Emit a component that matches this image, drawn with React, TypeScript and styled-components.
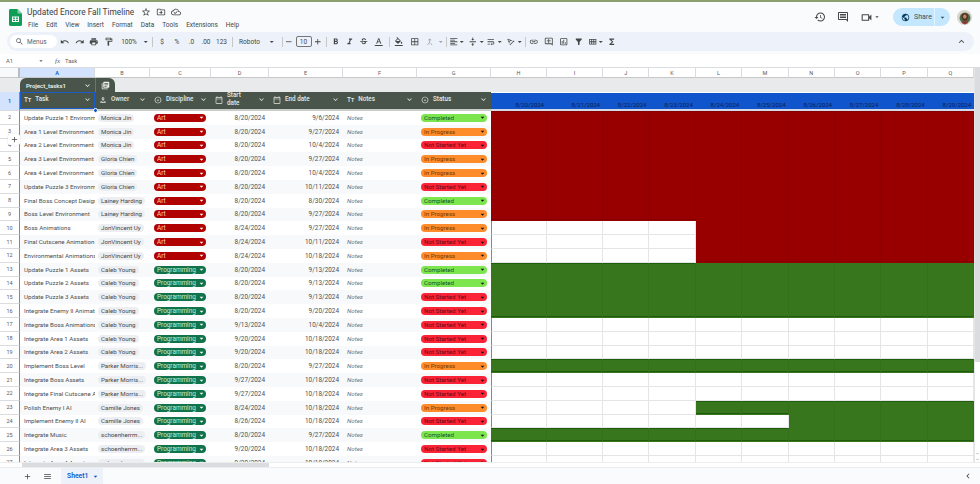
import styled, { createGlobalStyle } from 'styled-components';
import { ReactNode } from 'react';
import {
	MdSearch,
	MdUndo,
	MdRedo,
	MdPrint,
	MdOutlineFormatPaint,
	MdArrowDropDown,
	MdRemove,
	MdAdd,
	MdFormatBold,
	MdFormatItalic,
	MdStrikethroughS,
	MdFormatColorText,
	MdFormatColorFill,
	MdBorderAll,
	MdOutlineCallMerge,
	MdFormatAlignLeft,
	MdVerticalAlignCenter,
	MdWrapText,
	MdTextRotationAngleup,
	MdLink,
	MdOutlineAddComment,
	MdOutlineInsertChart,
	MdFilterAlt,
	MdOutlineViewModule,
	MdFunctions,
	MdKeyboardArrowUp,
	MdKeyboardArrowDown,
	MdHistory,
	MdOutlineComment,
	MdOutlineVideocam,
	MdPublic,
	MdStarBorder,
	MdOutlineDriveFileMove,
	MdOutlineCloudDone,
	MdMenu,
	MdOutlinePerson,
	MdOutlineArrowDropDownCircle,
	MdOutlineCalendarToday,
	MdLibraryBooks,
	MdChevronLeft,
} from 'react-icons/md';

type Fill = 'red' | 'green' | null;
type Status = 'Completed' | 'In Progress' | 'Not Started Yet';

const C: Status = 'Completed';
const P: Status = 'In Progress';
const N: Status = 'Not Started Yet';

const PARKER = 'Parker Morris...';
const SCHOEN = 'schoenherrm...';

// task, owner, start, end, status, first filled gantt column
const rows: [string, string, string, string, Status, number][] = [
	['Update Puzzle 1 Environment', 'Monica Jin', '8/20/2024', '9/6/2024', C, 0],
	['Area 1 Level Environment', 'Monica Jin', '8/20/2024', '9/27/2024', P, 0],
	['Area 2 Level Environment', 'Monica Jin', '8/20/2024', '10/4/2024', N, 0],
	['Area 3 Level Environment', 'Gloria Chien', '8/20/2024', '9/27/2024', P, 0],
	['Area 4 Level Environment', 'Gloria Chien', '8/20/2024', '10/4/2024', P, 0],
	['Update Puzzle 3 Environment', 'Gloria Chien', '8/20/2024', '10/11/2024', N, 0],
	['Final Boss Concept Design', 'Lainey Harding', '8/20/2024', '8/30/2024', C, 0],
	['Boss Level Environment', 'Lainey Harding', '8/20/2024', '9/27/2024', P, 0],
	['Boss Animations', 'JonVincent Uy', '8/24/2024', '9/27/2024', P, 4],
	['Final Cutscene Animation', 'JonVincent Uy', '8/24/2024', '10/11/2024', N, 4],
	['Environmental Animations', 'JonVincent Uy', '8/24/2024', '10/18/2024', P, 4],
	['Update Puzzle 1 Assets', 'Caleb Young', '8/20/2024', '9/13/2024', C, 0],
	['Update Puzzle 2 Assets', 'Caleb Young', '8/20/2024', '9/13/2024', C, 0],
	['Update Puzzle 3 Assets', 'Caleb Young', '8/20/2024', '9/13/2024', N, 0],
	['Integrate Enemy II Animations', 'Caleb Young', '8/20/2024', '9/20/2024', N, 0],
	['Integrate Boss Animations', 'Caleb Young', '9/13/2024', '10/4/2024', N, 10],
	['Integrate Area 1 Assets', 'Caleb Young', '9/20/2024', '10/18/2024', N, 10],
	['Integrate Area 2 Assets', 'Caleb Young', '9/20/2024', '10/18/2024', N, 10],
	['Implement Boss Level', PARKER, '8/20/2024', '9/27/2024', P, 0],
	['Integrate Boss Assets', PARKER, '9/27/2024', '10/18/2024', N, 10],
	['Integrate Final Cutscene Assets', PARKER, '9/27/2024', '10/18/2024', N, 10],
	['Polish Enemy I AI', 'Camille Jones', '8/24/2024', '10/18/2024', P, 4],
	['Implement Enemy II AI', 'Camille Jones', '8/26/2024', '10/18/2024', N, 6],
	['Integrate Music', SCHOEN, '8/20/2024', '9/27/2024', C, 0],
	['Integrate Area 3 Assets', SCHOEN, '9/20/2024', '10/18/2024', N, 10],
	['Integrate Area 4 Assets', SCHOEN, '9/20/2024', '10/18/2024', N, 10],
];

const columns = ['A', 'B', 'C', 'D', 'E', 'F', 'G', 'H', 'I', 'J', 'K', 'L', 'M', 'N', 'O', 'P', 'Q'];
const dates = ['8/20', '8/21', '8/22', '8/23', '8/24', '8/25', '8/26', '8/27', '8/28', '8/29'].map((d) => `${d}/2024`);
const menus = ['File', 'Edit', 'View', 'Insert', 'Format', 'Data', 'Tools', 'Extensions', 'Help'];

const discipline = (index: number) => (index < 11 ? 'Art' : 'Programming');

const fillAt = (rowIndex: number, col: number): Fill => {
	const row = rows[rowIndex];
	if (!row || col < row[5]) return null;
	return rowIndex < 11 ? 'red' : 'green';
};

const Tool = ({ w, children, dim }: { w: number; children: ReactNode; dim?: boolean }) => (
	<ToolButton $w={w} $dim={dim}>
		{children}
	</ToolButton>
);

const Logo = () => (
	<svg width="13" height="17" viewBox="0 0 13 17">
		<path d="M1.4 0H8.5L13 4.5V15.6C13 16.4 12.4 17 11.6 17H1.4C.6 17 0 16.4 0 15.6V1.4C0 .6.6 0 1.4 0Z" fill="#0f9d58" />
		<path d="M8.5 0L13 4.5H9.6C9 4.5 8.5 4 8.5 3.4Z" fill="#87ceac" />
		<path d="M3 7.6H10V13H3ZM4 8.6V9.8H6V8.6ZM7 8.6V9.8H9V8.6ZM4 10.8V12H6V10.8ZM7 10.8V12H9V10.8Z" fill="#fff" fillRule="evenodd" />
	</svg>
);

const Avatar = () => (
	<svg width="15" height="15" viewBox="0 0 15 15">
		<circle cx="7.5" cy="7.5" r="7.5" fill="#d9d4cc" />
		<circle cx="8" cy="8" r="5.4" fill="#4d6b4a" />
		<path d="M4.5 5.5C5 2.8 10 2.6 11 5.2C11.4 7 10.4 8 10 10.4H6.4C5.8 8.6 4.2 7.4 4.5 5.5Z" fill="#5a2f20" />
		<ellipse cx="7.8" cy="6.6" rx="1.7" ry="2.1" fill="#c48a68" />
		<path d="M4.6 13C5 10.6 10.4 10.4 11 13L8 14.4Z" fill="#8a3b36" />
	</svg>
);

function App() {
	return (
		<Page>
			<GlobalStyle />
			<TitleBar>
				<LogoSlot>
					<Logo />
				</LogoSlot>
				<TitleBlock>
					<TitleLine>
						<Title>Updated Encore Fall Timeline</Title>
						<TitleIcons>
							<MdStarBorder size={10} />
							<MdOutlineDriveFileMove size={10} />
							<MdOutlineCloudDone size={10} />
						</TitleIcons>
					</TitleLine>
					<MenuBar>
						{menus.map((m) => (
							<span key={m}>{m}</span>
						))}
					</MenuBar>
				</TitleBlock>
				<HeaderActions>
					<MdHistory size={12} />
					<MdOutlineComment size={12} />
					<VideoGroup>
						<MdOutlineVideocam size={13} />
						<MdArrowDropDown size={8} />
					</VideoGroup>
					<ShareButton>
						<ShareMain>
							<MdPublic size={9} color="#0b3c60" />
							Share
						</ShareMain>
						<ShareArrow>
							<MdArrowDropDown size={9} />
						</ShareArrow>
					</ShareButton>
					<AvatarSlot>
						<Avatar />
					</AvatarSlot>
				</HeaderActions>
			</TitleBar>

			<Toolbar>
				<SearchPill>
					<MdSearch size={9} />
					Menus
				</SearchPill>
				<Tool w={14}><MdUndo /></Tool>
				<Tool w={14.5}><MdRedo /></Tool>
				<Tool w={14.5}><MdPrint /></Tool>
				<Tool w={14.5}><MdOutlineFormatPaint /></Tool>
				<Tool w={27}>100%</Tool>
				<Tool w={7}><MdArrowDropDown /></Tool>
				<Divider />
				<Tool w={15}>$</Tool>
				<Tool w={15}>%</Tool>
				<Tool w={14}>.0</Tool>
				<Tool w={15}>.00</Tool>
				<Tool w={16}>123</Tool>
				<Divider />
				<Tool w={30}>Roboto</Tool>
				<Tool w={15}><MdArrowDropDown /></Tool>
				<Divider />
				<Tool w={9}><MdRemove /></Tool>
				<SizeBox>10</SizeBox>
				<Tool w={12}><MdAdd /></Tool>
				<Divider />
				<Tool w={14}><MdFormatBold /></Tool>
				<Tool w={14}><MdFormatItalic /></Tool>
				<Tool w={15}><MdStrikethroughS /></Tool>
				<Tool w={15}><MdFormatColorText /></Tool>
				<Divider />
				<Tool w={15}><MdFormatColorFill /></Tool>
				<Tool w={16}><MdBorderAll /></Tool>
				<Tool w={15} dim><MdOutlineCallMerge /></Tool>
				<Tool w={6} dim><MdArrowDropDown /></Tool>
				<Divider />
				<Tool w={10}><MdFormatAlignLeft /></Tool>
				<Tool w={7}><MdArrowDropDown /></Tool>
				<Tool w={14}><MdVerticalAlignCenter /></Tool>
				<Tool w={5}><MdArrowDropDown /></Tool>
				<Tool w={12}><MdWrapText /></Tool>
				<Tool w={7}><MdArrowDropDown /></Tool>
				<Tool w={14}><MdTextRotationAngleup /></Tool>
				<Tool w={5}><MdArrowDropDown /></Tool>
				<Divider />
				<Tool w={12}><MdLink /></Tool>
				<Tool w={18}><MdOutlineAddComment /></Tool>
				<Tool w={12}><MdOutlineInsertChart /></Tool>
				<Tool w={18}><MdFilterAlt /></Tool>
				<Tool w={10}><MdOutlineViewModule /></Tool>
				<Tool w={6}><MdArrowDropDown /></Tool>
				<Tool w={17}><MdFunctions /></Tool>
				<CollapseSlot>
					<MdKeyboardArrowUp size={11} />
				</CollapseSlot>
			</Toolbar>

			<FormulaBar>
				<NameBox>A1</NameBox>
				<MdArrowDropDown size={8} />
				<Fx>fx</Fx>
				<span>Task</span>
			</FormulaBar>

			<SheetArea>
				<Sheet>
					<Corner />
					{columns.map((c) => (
						<ColumnHead key={c} $active={c === 'A'}>
							{c}
						</ColumnHead>
					))}

					<TableBand>
						<TableTab>
							<TabName>
								Project_tasks1
								<MdKeyboardArrowDown size={9} />
							</TabName>
							<TabCopy>
								<MdLibraryBooks size={9} />
							</TabCopy>
						</TableTab>
					</TableBand>

					<RowHead $active>1</RowHead>
					<HeadCell $selected>
						<HeadIcon>Tт</HeadIcon>
						<HeadLabel>Task</HeadLabel>
						<MdKeyboardArrowDown size={9} />
						<Handle />
					</HeadCell>
					<HeadCell>
						<HeadIcon><MdOutlinePerson size={8} /></HeadIcon>
						<HeadLabel>Owner</HeadLabel>
						<MdKeyboardArrowDown size={9} />
					</HeadCell>
					<HeadCell>
						<HeadIcon><MdOutlineArrowDropDownCircle size={8} /></HeadIcon>
						<HeadLabel>Discipline</HeadLabel>
						<MdKeyboardArrowDown size={9} />
					</HeadCell>
					<HeadCell>
						<HeadIcon><MdOutlineCalendarToday size={8} /></HeadIcon>
						<HeadLabel>Start date</HeadLabel>
						<MdKeyboardArrowDown size={9} />
					</HeadCell>
					<HeadCell>
						<HeadIcon><MdOutlineCalendarToday size={8} /></HeadIcon>
						<HeadLabel>End date</HeadLabel>
						<MdKeyboardArrowDown size={9} />
					</HeadCell>
					<HeadCell>
						<HeadIcon>Tт</HeadIcon>
						<HeadLabel>Notes</HeadLabel>
						<MdKeyboardArrowDown size={9} />
					</HeadCell>
					<HeadCell>
						<HeadIcon><MdOutlineArrowDropDownCircle size={8} /></HeadIcon>
						<HeadLabel>Status</HeadLabel>
						<MdKeyboardArrowDown size={9} />
					</HeadCell>
					{dates.map((d) => (
						<DateCell key={d}>{d}</DateCell>
					))}

					{rows.map((row, i) => {
						const band = i % 2 === 1;
						const kind = discipline(i);
						return [
							<RowHead key={`n${i}`}>{i + 2}</RowHead>,
							<TextCell key={`t${i}`} $band={band}>{row[0]}</TextCell>,
							<TextCell key={`o${i}`} $band={band}>
								<OwnerChip>{row[1]}</OwnerChip>
							</TextCell>,
							<TextCell key={`d${i}`} $band={band}>
								<DisciplinePill $kind={kind}>
									{kind}
									<MdArrowDropDown size={9} />
								</DisciplinePill>
							</TextCell>,
							<DateValue key={`s${i}`} $band={band}>{row[2]}</DateValue>,
							<DateValue key={`e${i}`} $band={band}>{row[3]}</DateValue>,
							<NoteCell key={`m${i}`} $band={band}>Notes</NoteCell>,
							<TextCell key={`g${i}`} $band={band}>
								<StatusPill $status={row[4]}>
									{row[4]}
									<MdArrowDropDown size={9} />
								</StatusPill>
							</TextCell>,
							...dates.map((d, col) => (
								<GanttCell
									key={`${i}-${d}`}
									$first={col === 0}
									$fill={fillAt(i, col)}
									$edgeTop={fillAt(i, col) !== null && fillAt(i - 1, col) === null}
									$edgeBottom={fillAt(i, col) !== null && fillAt(i + 1, col) !== fillAt(i, col)}
								/>
							)),
						];
					})}
				</Sheet>
				<VerticalBar>
					<VerticalThumb />
					<BarArrows>
						<MdKeyboardArrowUp size={5} />
						<MdKeyboardArrowDown size={5} />
					</BarArrows>
				</VerticalBar>
				<AddRowBadge>
					<MdAdd size={9} />
				</AddRowBadge>
			</SheetArea>

			<HorizontalBar>
				<HorizontalThumb />
			</HorizontalBar>

			<Footer>
				<MdAdd size={9} />
				<MdMenu size={9} />
				<SheetTab>
					Sheet1
					<MdArrowDropDown size={9} />
				</SheetTab>
				<FooterEnd>
					<MdChevronLeft size={10} />
				</FooterEnd>
			</Footer>
		</Page>
	);
}

export default App;

const GlobalStyle = createGlobalStyle`
	html, body {
		margin: 0;
		padding: 0;
		background: #fff;
	}
	* {
		box-sizing: border-box;
	}
`;

const Page = styled.div`
	width: 980px;
	height: 484px;
	overflow: hidden;
	display: flex;
	flex-direction: column;
	background: #f9fbfd;
	border-top: 2px solid #8e9f6f;
	font-family: Roboto, 'Liberation Sans', sans-serif;
	color: #444746;
`;

const TitleBar = styled.div`
	height: 30px;
	display: flex;
	align-items: flex-start;
	flex-shrink: 0;
`;

const LogoSlot = styled.div`
	width: 27px;
	padding: 7px 0 0 9px;
`;

const TitleBlock = styled.div`
	display: flex;
	flex-direction: column;
	padding-top: 3px;
`;

const TitleLine = styled.div`
	display: flex;
	align-items: center;
	height: 13px;
`;

const Title = styled.span`
	font-size: 8.3px;
	color: #3c4043;
	white-space: nowrap;
`;

const TitleIcons = styled.div`
	display: flex;
	gap: 5px;
	margin-left: 7px;
	color: #444746;
`;

const MenuBar = styled.div`
	display: flex;
	gap: 8px;
	margin-top: 3px;
	padding-left: 1px;
	font-size: 6.5px;
	color: #444746;
`;

const HeaderActions = styled.div`
	margin-left: auto;
	display: flex;
	align-items: center;
	height: 20px;
	margin-top: 5px;
	color: #444746;
	gap: 11px;
`;

const VideoGroup = styled.div`
	display: flex;
	align-items: center;
	margin-right: 1px;
`;

const ShareButton = styled.div`
	width: 57px;
	height: 18px;
	border-radius: 9px;
	display: flex;
	overflow: hidden;
	background: #c2e7ff;
	font-size: 7px;
	color: #33525f;
`;

const ShareMain = styled.div`
	flex: 1;
	display: flex;
	align-items: center;
	gap: 4px;
	padding-left: 8px;
	border-right: 1px solid #e3f3ff;
`;

const ShareArrow = styled.div`
	width: 15px;
	display: flex;
	align-items: center;
	justify-content: center;
`;

const AvatarSlot = styled.div`
	width: 15px;
	height: 15px;
	margin: 0 8px 0 -4px;
`;

const Toolbar = styled.div`
	height: 19px;
	margin: 0 6px 0 7px;
	padding-left: 3px;
	display: flex;
	align-items: center;
	flex-shrink: 0;
	border-radius: 10px;
	background: #edf2fa;
	color: #444746;
`;

const SearchPill = styled.div`
	width: 47px;
	height: 13px;
	margin-right: 1px;
	padding-left: 5px;
	display: flex;
	align-items: center;
	gap: 3px;
	border-radius: 7px;
	background: #fff;
	font-size: 6.5px;
	color: #5f6368;
`;

const ToolButton = styled.div<{ $w: number; $dim?: boolean }>`
	width: ${(p) => p.$w}px;
	height: 14px;
	flex-shrink: 0;
	display: flex;
	align-items: center;
	justify-content: center;
	font-size: 6.5px;
	white-space: nowrap;
	opacity: ${(p) => (p.$dim ? 0.45 : 1)};

	svg {
		width: 9.5px;
		height: 9.5px;
		flex-shrink: 0;
	}
`;

const Divider = styled.div`
	width: 1px;
	height: 10px;
	margin: 0 2px;
	flex-shrink: 0;
	background: #c7c7c7;
`;

const SizeBox = styled.div`
	width: 16px;
	height: 11px;
	margin-left: 2px;
	flex-shrink: 0;
	display: flex;
	align-items: center;
	justify-content: center;
	border: 1px solid #747775;
	border-radius: 2px;
	font-size: 6.5px;
`;

const CollapseSlot = styled.div`
	margin-left: auto;
	margin-right: 7px;
	display: flex;
`;

const FormulaBar = styled.div`
	height: 13px;
	margin-top: 3px;
	padding-left: 6px;
	display: flex;
	align-items: center;
	flex-shrink: 0;
	background: #fff;
	font-size: 5.8px;
	color: #5f6368;
`;

const NameBox = styled.span`
	width: 31px;
`;

const Fx = styled.i`
	margin: 0 5px 0 10px;
	font-family: 'Liberation Serif', serif;
	font-size: 7px;
`;

const SheetArea = styled.div`
	position: relative;
	height: 395px;
	flex-shrink: 0;
	display: flex;
	overflow: hidden;
	background: #fff;
	border-top: 1px solid #dadce0;
`;

const Sheet = styled.div`
	display: grid;
	grid-template-columns: 20px 75px 55px 61px 58px 74px 74px 74px 56px 56px repeat(8, 46.4px);
	grid-template-rows: 10px 14px 19px;
	grid-auto-rows: 13.8px;
	align-content: start;
	font-size: 6.2px;
`;

const Corner = styled.div`
	background: #f8f9fa;
	border-right: 2px solid #b9bcc0;
	border-bottom: 1px solid #c7c7c7;
`;

const ColumnHead = styled.div<{ $active?: boolean }>`
	display: flex;
	align-items: center;
	justify-content: center;
	font-size: 5.5px;
	color: ${(p) => (p.$active ? '#0b57d0' : '#575a5e')};
	font-weight: ${(p) => (p.$active ? 600 : 400)};
	background: ${(p) => (p.$active ? '#d3e3fd' : '#fff')};
	border-right: 1px solid #dadce0;
	border-bottom: 1px solid #c7c7c7;
`;

const TableBand = styled.div`
	grid-column: 1 / -1;
	display: flex;
	padding-left: 20px;
	background: #e9eaec;
`;

const TableTab = styled.div`
	width: 95px;
	display: flex;
	border-radius: 6px 6px 0 0;
	background: #49554a;
	color: #eef1ec;
	font-size: 6px;
	font-weight: 600;
`;

const TabName = styled.div`
	flex: 1;
	display: flex;
	align-items: center;
	justify-content: space-between;
	padding: 0 3px 0 6px;
	border-right: 1px solid #6a766b;
`;

const TabCopy = styled.div`
	width: 19px;
	display: flex;
	align-items: center;
	justify-content: center;
`;

const RowHead = styled.div<{ $active?: boolean }>`
	display: flex;
	align-items: center;
	justify-content: center;
	font-size: 5.5px;
	color: ${(p) => (p.$active ? '#0b57d0' : '#575a5e')};
	font-weight: ${(p) => (p.$active ? 600 : 400)};
	background: ${(p) => (p.$active ? '#d3e3fd' : '#fff')};
	border-right: 1px solid #85888c;
	border-bottom: 1px solid #dadce0;
`;

const HeadCell = styled.div<{ $selected?: boolean }>`
	position: relative;
	min-width: 0;
	display: flex;
	align-items: center;
	gap: 3px;
	padding: 0 3px 2px 4px;
	background: #49554a;
	background-clip: padding-box;
	color: #e6e9e4;
	font-size: 6.3px;
	font-weight: 500;
	border-bottom: 2px solid #c9ccc9;
	box-shadow: ${(p) => (p.$selected ? 'inset 0 0 0 1px #1a5dc8' : 'none')};

	svg {
		flex-shrink: 0;
	}
`;

const HeadIcon = styled.span`
	display: flex;
	margin-right: 1px;
	font-size: 6.5px;
`;

const HeadLabel = styled.span`
	flex: 1;
	min-width: 0;
	line-height: 7.5px;
`;

const Handle = styled.span`
	position: absolute;
	right: -3px;
	bottom: -4px;
	z-index: 2;
	width: 5px;
	height: 5px;
	border-radius: 50%;
	background: #0b57d0;
	border: 1px solid #fff;
`;

const DateCell = styled.div`
	display: flex;
	align-items: flex-end;
	justify-content: flex-end;
	padding: 0 3px 1px 0;
	font-size: 6px;
	color: #0a1f4d;
	background: #1155cc;
	background-clip: padding-box;
	border-top: 1px solid #fff;
	border-bottom: 2px solid #d5dbe6;
`;

const TextCell = styled.div<{ $band?: boolean }>`
	min-width: 0;
	display: flex;
	align-items: center;
	padding: 0 0 0 4px;
	overflow: hidden;
	white-space: nowrap;
	color: #4c4f52;
	background: ${(p) => (p.$band ? '#f8f9fa' : '#fff')};
`;

const DateValue = styled(TextCell)`
	justify-content: flex-end;
	padding: 0 4px 0 0;
	font-size: 6.4px;
`;

const NoteCell = styled(TextCell)`
	font-style: italic;
	color: #6f7275;
`;

const OwnerChip = styled.span`
	height: 8px;
	margin-left: -1px;
	padding: 0 3px;
	display: flex;
	align-items: center;
	border-radius: 4px;
	background: #eceef1;
	color: #46494d;
`;

const Pill = styled.span`
	height: 8px;
	display: flex;
	align-items: center;
	justify-content: space-between;
	padding-left: 3px;
	border-radius: 4px;

	svg {
		flex-shrink: 0;
	}
`;

const DisciplinePill = styled(Pill)<{ $kind: string }>`
	width: 52px;
	font-size: 6.4px;
	color: ${(p) => (p.$kind === 'Art' ? '#ffcfc9' : '#c6efce')};
	background: ${(p) => (p.$kind === 'Art' ? '#b10202' : '#11734b')};

	svg {
		color: #fff;
	}
`;

const statusColors: Record<Status, [string, string]> = {
	Completed: ['#7de64f', '#14532d'],
	'In Progress': ['#ff8c2b', '#6e3a05'],
	'Not Started Yet': ['#fb2437', '#630a12'],
};

const StatusPill = styled(Pill)<{ $status: Status }>`
	width: 66px;
	background: ${(p) => statusColors[p.$status][0]};
	color: ${(p) => statusColors[p.$status][1]};

	svg {
		color: #111;
	}
`;

const fillColors = { red: '#980000', green: '#38761d' };
const edgeColors = { red: '#850000', green: '#1f5c0c' };

const GanttCell = styled.div<{ $first: boolean; $fill: Fill; $edgeTop: boolean; $edgeBottom: boolean }>`
	background: ${(p) => (p.$fill ? fillColors[p.$fill] : '#fff')};
	border-left: ${(p) => (p.$first && !p.$fill ? '1.5px solid #85888c' : 'none')};
	border-right: 1px solid ${(p) => (p.$fill ? 'rgba(0, 0, 0, 0.06)' : '#e4e5e7')};
	border-bottom: 1px solid ${(p) => (p.$fill ? 'transparent' : '#e4e5e7')};
	box-shadow: ${(p) => {
		if (!p.$fill) return 'none';
		const edge = edgeColors[p.$fill];
		const top = p.$edgeTop ? `inset 0 1px 0 ${edge}` : '';
		const bottom = p.$edgeBottom ? `inset 0 -1px 0 ${edge}` : '';
		return [top, bottom].filter(Boolean).join(', ') || 'none';
	}};
`;

const VerticalBar = styled.div`
	flex: 1;
	display: flex;
	flex-direction: column;
	justify-content: space-between;
	background: #fff;
	border-left: 1px solid #e4e5e7;
`;

const VerticalThumb = styled.div`
	height: 294px;
	background: #dadce0;
`;

const BarArrows = styled.div`
	display: flex;
	flex-direction: column;
	gap: 1px;
	color: #80868b;
`;

const AddRowBadge = styled.div`
	position: absolute;
	left: 8px;
	top: 66px;
	width: 12px;
	height: 11px;
	display: flex;
	align-items: center;
	justify-content: center;
	background: #fff;
	color: #444746;
	border-radius: 2px;
	box-shadow: 0 0 1px rgba(0, 0, 0, 0.35);
`;

const HorizontalBar = styled.div`
	height: 5px;
	flex-shrink: 0;
	padding-left: 22px;
	background: #fff;
	border-top: 1px solid #eceded;
`;

const HorizontalThumb = styled.div`
	width: 247px;
	height: 4px;
	background: #dadce0;
`;

const Footer = styled.div`
	flex: 1;
	display: flex;
	align-items: center;
	padding-left: 23px;
	gap: 11px;
	background: #f9fbfd;
	border-top: 1px solid #eceded;
	color: #444746;
`;

const SheetTab = styled.div`
	width: 42px;
	height: 100%;
	margin-left: -2px;
	display: flex;
	align-items: center;
	justify-content: space-between;
	padding: 0 3px 0 6px;
	background: #edf2fa;
	color: #0b57d0;
	font-size: 6.8px;
	font-weight: 600;
`;

const FooterEnd = styled.div`
	margin-left: auto;
	margin-right: 7px;
	display: flex;
`;
